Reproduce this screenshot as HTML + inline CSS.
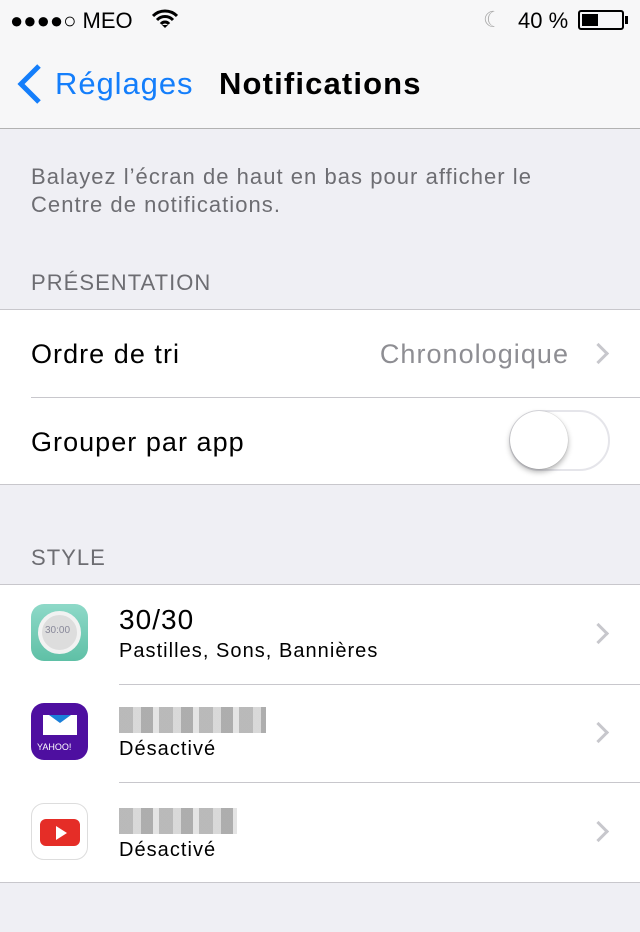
<!DOCTYPE html>
<html><head><meta charset="utf-8"><style>
*{margin:0;padding:0;box-sizing:border-box}
body{width:640px;height:932px;background:#efeff4;font-family:"Liberation Sans",sans-serif;position:relative;overflow:hidden;letter-spacing:.065em}
.a{position:absolute;white-space:nowrap}
.nav{position:absolute;left:0;top:0;width:640px;height:129px;background:#f7f7f8;border-bottom:1px solid #b2b2b2}
.grp{position:absolute;left:0;width:640px;background:#fff;border-top:1px solid #c8c7cc;border-bottom:1px solid #c8c7cc}
.sep{position:absolute;height:1px;background:#c8c7cc;right:0}
.hdr{color:#6d6d72;font-size:22px}
.chev{position:absolute;width:15px;height:15px;border-right:3px solid #c7c7cc;border-top:3px solid #c7c7cc;transform:rotate(45deg)}
.ic{position:absolute;left:31px;width:57px;height:57px;border-radius:13px;overflow:hidden;letter-spacing:0}
.blur{position:absolute;height:26px;background:repeating-linear-gradient(90deg,#a8a8a8 0 14px,#cfcfcf 14px 22px,#999 22px 34px,#ddd 34px 40px);opacity:.8}
</style></head><body>
<div class="nav"></div>
<div class="a" style="left:10px;top:8px;font-size:22px;color:#000;letter-spacing:0">●●●●○ MEO</div>
<svg class="a" style="left:152px;top:9px" width="26" height="20" viewBox="0 0 26 20"><path d="M1 7a17 17 0 0 1 24 0M5 11a11 11 0 0 1 16 0M9 15a5 5 0 0 1 8 0" stroke="#000" stroke-width="3" fill="none"/><path d="M10 16l3 3 3-3z" fill="#000"/></svg>
<div class="a" style="left:483px;top:7px;font-size:22px;color:#aaa">☾</div>
<div class="a" style="left:518px;top:8px;font-size:22px;letter-spacing:0">40 %</div>
<div class="a" style="left:578px;top:10px;width:46px;height:20px;border:2px solid #000;border-radius:3px"><div style="position:absolute;left:2px;top:2px;width:16px;height:12px;background:#000"></div></div>
<div class="a" style="left:625px;top:16px;width:3px;height:8px;background:#000"></div>
<svg class="a" style="left:15px;top:63px" width="30" height="42" viewBox="0 0 30 42"><path d="M24 3L6 21l18 18" stroke="#147efb" stroke-width="5" fill="none"/></svg>
<div class="a" style="left:55px;top:66px;font-size:31px;color:#147efb;letter-spacing:.03em">Réglages</div>
<div class="a" style="left:219px;top:66px;font-size:31px;font-weight:bold;letter-spacing:.037em">Notifications</div>
<div class="a hdr" style="left:31px;top:163px;line-height:28px">Balayez l’écran de haut en bas pour afficher le<br>Centre de notifications.</div>
<div class="a hdr" style="left:31px;top:270px">PRÉSENTATION</div>
<div class="grp" style="top:309px;height:176px"></div>
<div class="sep" style="left:31px;top:397px"></div>
<div class="a" style="left:31px;top:339px;font-size:27px">Ordre de tri</div>
<div class="a" style="right:71px;top:339px;font-size:27px;color:#8e8e93">Chronologique</div>
<div class="chev" style="left:591px;top:346px"></div>
<div class="a" style="left:31px;top:427px;font-size:27px">Grouper par app</div>
<div class="a" style="left:509px;top:410px;width:101px;height:61px;border:2px solid #e5e5ea;border-radius:31px;background:#fff"></div>
<div class="a" style="left:510px;top:411px;width:58px;height:58px;border-radius:50%;background:#fff;box-shadow:0 3px 6px rgba(0,0,0,.3),0 0 1px rgba(0,0,0,.3)"></div>
<div class="a hdr" style="left:31px;top:545px">STYLE</div>
<div class="grp" style="top:584px;height:299px"></div>
<div class="sep" style="left:119px;top:684px"></div>
<div class="sep" style="left:119px;top:782px"></div>
<div class="ic" style="top:604px;background:linear-gradient(#8ed9c8,#5fc0a6)"><div style="position:absolute;left:7px;top:7px;width:43px;height:43px;border-radius:50%;background:#ddd;border:4px solid #f2f2f2"></div><div style="position:absolute;left:14px;top:21px;font-size:10px;color:#889">30:00</div></div>
<div class="a" style="left:119px;top:604px;font-size:28px">30/30</div>
<div class="a" style="left:119px;top:640px;font-size:20px">Pastilles, Sons, Bannières</div>
<div class="chev" style="left:591px;top:626px"></div>
<div class="ic" style="top:703px;background:#4e0fa0"><div style="position:absolute;left:12px;top:12px;width:34px;height:20px;background:#fff"></div><div style="position:absolute;left:18px;top:12px;border-left:11px solid transparent;border-right:11px solid transparent;border-top:8px solid #1b7fd9"></div><div style="position:absolute;left:6px;top:39px;font-size:9px;color:#fff">YAHOO!</div></div>
<div class="blur" style="left:119px;top:707px;width:147px"></div>
<div class="a" style="left:119px;top:738px;font-size:20px">Désactivé</div>
<div class="chev" style="left:591px;top:725px"></div>
<div class="ic" style="top:803px;background:#fff;border:1px solid #ddd"><div style="position:absolute;left:8px;top:15px;width:40px;height:27px;background:#e52d27;border-radius:6px"></div><div style="position:absolute;left:24px;top:22px;border-top:7px solid transparent;border-bottom:7px solid transparent;border-left:11px solid #fff"></div></div>
<div class="blur" style="left:119px;top:808px;width:118px"></div>
<div class="a" style="left:119px;top:839px;font-size:20px">Désactivé</div>
<div class="chev" style="left:591px;top:824px"></div>
</body></html>
